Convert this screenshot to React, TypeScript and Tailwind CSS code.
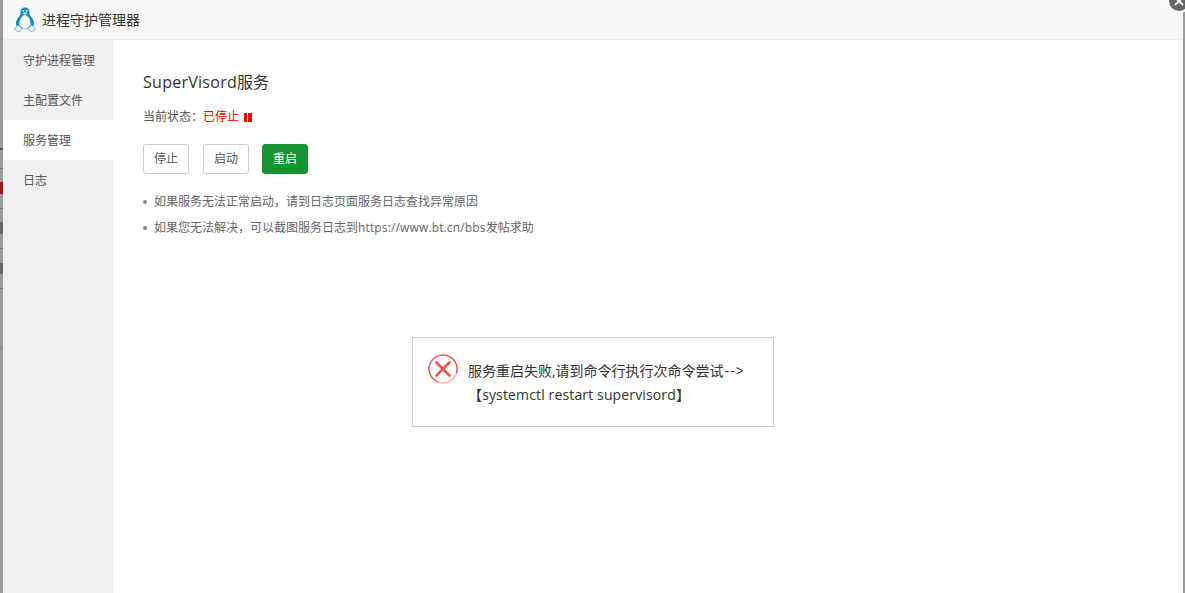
const font = "font-['Open_Sans','Noto_Sans_CJK_SC',sans-serif]";

const menu = ["守护进程管理", "主配置文件", "服务管理", "日志"];

// marks of the page that shows behind the dialog on the left edge
const behind = [
  "top-[148px] h-[2px] bg-[#555]",
  "top-[168px] h-px bg-[#777]",
  "top-[182px] h-[12px] bg-[#a8141c]",
  "top-[208px] h-px bg-[#777]",
  "top-[222px] h-[12px] bg-[#5d6a78]",
  "top-[248px] h-px bg-[#777]",
  "top-[263px] h-[11px] bg-[#5d6a78]",
  "top-[288px] h-px bg-[#777]",
  "top-[348px] h-px bg-[#888]",
];

const Tux = () => (
  <svg width="22" height="25" viewBox="0 0 22 25">
    <path d="M11 .5C7.500.5 6.300 3 6.500 6c.1 1.800-1 3.200-2.400 4.800C2.300 13 1.500 15.500 2.200 18.500l3.800 3h10l3.800-3c.7-3-.1-5.500-1.900-7.700-1.400-1.600-2.500-3-2.400-4.800.2-3-1-5.500-4.500-5.500z" fill="#1a8bc0" />
    <path d="M11 7.800c-3 1-5.500 4.800-5.500 8.400 0 3 2.200 4.800 5.500 4.800s5.500-1.800 5.500-4.800c0-3.600-2.500-7.400-5.500-8.400z" fill="#fff" />
    <path d="M8.600 6.300 11 5l2.400 1.300L11 8z" fill="#bfe2f2" />
    <circle cx="9.300" cy="3.800" r=".9" fill="#fff" />
    <circle cx="12.700" cy="3.800" r=".9" fill="#fff" />
    <path d="M.6 21.600 4.300 18l3.800 3.600-2.600 2.900C3.400 24.700 1 23.500.6 21.600z" fill="#e6f3f9" stroke="#4fa8d2" strokeWidth=".8" />
    <path d="M21.400 21.600 17.700 18l-3.800 3.600 2.600 2.900c2.100.2 4.500-1 4.900-2.900z" fill="#e6f3f9" stroke="#4fa8d2" strokeWidth=".8" />
  </svg>
);

const ErrorIcon = () => (
  <svg width="30" height="30" viewBox="0 0 30 30" fill="none" stroke="#e9584e">
    <path d="M10 28A14 14 0 1 1 28.500 19" strokeWidth="1.500" />
    <path d="M10 28A14 14 0 0 0 28.500 19" strokeWidth="1.500" stroke="#f4b5b0" />
    <path d="M8.500 8.500l13 13M21.500 8.500l-13 13" strokeWidth="2.800" strokeLinecap="round" />
  </svg>
);

const Btn = ({ label, green }: { label: string; green?: boolean }) => (
  <button
    className={
      green
        ? "ml-[-1px] h-[30px] w-[46px] rounded-[3px] border border-[#15942f] bg-[#15942f] text-xs text-white"
        : "h-[30px] w-[46px] rounded-[3px] border border-[#ccc] bg-white text-xs text-[#555]"
    }
  >
    {label}
  </button>
);

export default function App() {
  return (
    <div className={`${font} relative flex h-[593px] w-[1185px] overflow-hidden bg-[#9a9a9a]`}>
      <div className="ml-[3px] flex w-[1180px] flex-col bg-white">
        <div className="flex h-[40px] items-center gap-[6px] border-b border-[#eee] bg-[#f8f8f8] pl-[11px] text-[14px] text-[#333]">
          <Tux />
          <span>进程守护管理器</span>
        </div>
        <div className="flex flex-1">
          <div className="w-[110px] bg-[#f0f0f0] text-xs text-[#555]">
            {menu.map((m, i) => (
              <div key={m} className={i === 2 ? "flex h-[40px] items-center bg-white pl-[20px] pt-px" : "flex h-[40px] items-center pl-[20px] pt-px"}>
                {m}
              </div>
            ))}
          </div>
          <div className="relative flex-1 pl-[30px] pt-[30px]">
            <h2 className="text-base leading-[24px] text-[#333]">
              <span className="tracking-[0.27px]">SuperVisord</span>服务
            </h2>
            <div className="mt-[14px] flex h-[18px] items-center text-xs text-[#555]">
              <span>当前状态：</span>
              <span className="text-[#f00]">已停止</span>
              <span className="ml-[5px] flex gap-px">
                <span className="h-[9px] w-[3px] bg-[#f00]" />
                <span className="h-[9px] w-[4px] bg-[#f00]" />
              </span>
            </div>
            <div className="mt-[18px] flex gap-[14px]">
              <Btn label="停止" />
              <Btn label="启动" />
              <Btn label="重启" green />
            </div>
            <ul className="mt-[15px] text-xs leading-[26px] text-[#666]">
              <li className="flex items-center gap-[7px]">
                <span className="h-[4px] w-[4px] rounded-full bg-[#888]" />
                如果服务无法正常启动，请到日志页面服务日志查找异常原因
              </li>
              <li className="flex items-center gap-[7px]">
                <span className="h-[4px] w-[4px] rounded-full bg-[#888]" />
                <span>
                  如果您无法解决，可以截图服务日志到<span className="tracking-[0.14px]">https://www.bt.cn/bbs</span>发帖求助
                </span>
              </li>
            </ul>
          </div>
        </div>
      </div>

      {behind.map((b) => (
        <div key={b} className={`absolute left-0 w-[3px] ${b}`} />
      ))}

      {/* close button */}
      <div className="absolute left-[1167px] top-[-11px] flex h-[24px] w-[24px] items-center justify-center rounded-full border-2 border-white bg-[#666]">
        <svg width="12" height="12" viewBox="0 0 12 12" stroke="#fff" strokeWidth="2">
          <path d="M2 2l8 8M10 2 2 10" />
        </svg>
      </div>

      {/* error message */}
      <div className="absolute left-[412px] top-[337px] flex h-[90px] w-[362px] border border-[#ccc] bg-white pl-[15px] pt-[16px] text-[14px] text-[#333]">
        <ErrorIcon />
        <div className="ml-[10px] w-[290px] pt-[5px] leading-[24px]">
          服务重启失败,请到命令行执行次命令尝试<span className="ml-px tracking-[1px]">--&gt;</span>
          <br />
          <span className="tracking-[0.14px]">【systemctl restart supervisord】</span>
        </div>
      </div>
    </div>
  );
}
